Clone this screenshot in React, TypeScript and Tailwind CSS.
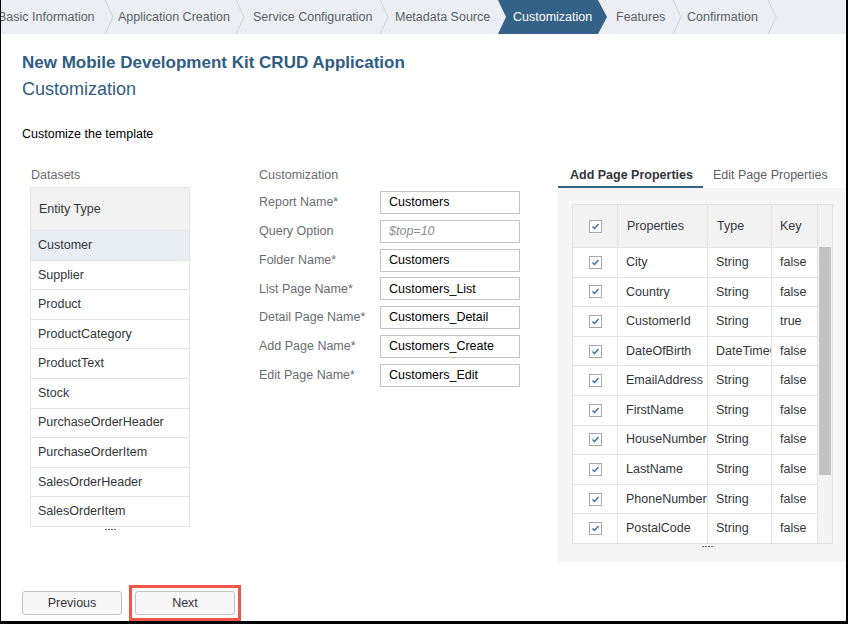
import React from "react";

const steps = [
  { label: "Basic Information", w: "w-[106px]", pl: "pl-0 -ml-[3px]" },
  { label: "Application Creation", w: "w-[121px]", pl: "pl-[4px]" },
  { label: "Service Configuration", w: "w-[134px]", pl: "pl-[8px]" },
  { label: "Metadata Source", w: "w-[109px]", pl: "pl-[6px]" },
];

const datasets = [
  "Customer",
  "Supplier",
  "Product",
  "ProductCategory",
  "ProductText",
  "Stock",
  "PurchaseOrderHeader",
  "PurchaseOrderItem",
  "SalesOrderHeader",
  "SalesOrderItem",
];

const fields = [
  { label: "Report Name*", value: "Customers" },
  { label: "Query Option", value: "$top=10", placeholder: true },
  { label: "Folder Name*", value: "Customers" },
  { label: "List Page Name*", value: "Customers_List" },
  { label: "Detail Page Name*", value: "Customers_Detail" },
  { label: "Add Page Name*", value: "Customers_Create" },
  { label: "Edit Page Name*", value: "Customers_Edit" },
];

const properties = [
  ["City", "String", "false"],
  ["Country", "String", "false"],
  ["CustomerId", "String", "true"],
  ["DateOfBirth", "DateTimeOffset", "false"],
  ["EmailAddress", "String", "false"],
  ["FirstName", "String", "false"],
  ["HouseNumber", "String", "false"],
  ["LastName", "String", "false"],
  ["PhoneNumber", "String", "false"],
  ["PostalCode", "String", "false"],
];

const Separator = () => (
  <svg width="10" height="34" viewBox="0 0 10 34" className="shrink-0">
    <polyline points="1,0 9,17 1,34" fill="none" stroke="#cdd2d8" strokeWidth="1" />
  </svg>
);

const Check = () => (
  <span className="flex h-[13px] w-[13px] items-center justify-center border border-[#a9a9a9] bg-white">
    <svg width="9" height="9" viewBox="0 0 9 9">
      <polyline points="1.5,4.5 3.5,6.5 7.5,2" fill="none" stroke="#2f6ea5" strokeWidth="1.3" />
    </svg>
  </span>
);

const MoreDots = () => (
  <div className="mx-auto mt-[2px] flex w-fit gap-[1px]">
    <span className="h-[1px] w-[2px] bg-[#666]" />
    <span className="h-[1px] w-[2px] bg-[#666]" />
    <span className="h-[1px] w-[2px] bg-[#666]" />
    <span className="h-[1px] w-[2px] bg-[#666]" />
  </div>
);

export default function App() {
  return (
    <div className="relative h-[624px] w-[848px] overflow-hidden border-b-[3px] border-l border-r-2 border-black bg-white font-['Liberation_Sans',Arial,sans-serif] text-[12.5px] text-[#32363a]">
      {/* wizard steps */}
      <div className="flex h-[34px] items-center bg-[#ebeff4] text-[#5b5f63]">
        {steps.map((s) => (
          <React.Fragment key={s.label}>
            <div className={`${s.w} ${s.pl} shrink-0 whitespace-nowrap pt-[1px]`}>{s.label}</div>
            {s.label !== "Metadata Source" && <Separator />}
          </React.Fragment>
        ))}
        <div className="flex h-[34px] w-[109px] shrink-0 items-center bg-[#346187] pl-[15px] pt-[1px] text-white [clip-path:polygon(0_0,calc(100%-9px)_0,100%_50%,calc(100%-9px)_100%,0_100%,8px_50%)]">
          Customization
        </div>
        <div className="w-[65px] shrink-0 pl-[9px] pt-[1px]">Features</div>
        <Separator />
        <div className="w-[85px] shrink-0 pl-[5px] pt-[1px]">Confirmation</div>
        <Separator />
      </div>

      <div className="pl-[21px] pt-[18px]">
        <h1 className="text-[17px] font-bold leading-[22px] text-[#305d82]">
          New Mobile Development Kit CRUD Application
        </h1>
        <h2 className="mt-[4px] text-[18px] leading-[22px] text-[#305d82]">Customization</h2>
        <p className="mt-[26px] text-[12.5px] leading-[16px] text-black">Customize the template</p>
      </div>

      <div className="mt-[25px] flex pl-[29px]">
        {/* datasets */}
        <div className="w-[160px] shrink-0">
          <div className="h-[20px] pl-[1px] leading-[16px] text-[#6a6d70]">Datasets</div>
          <div className="border border-[#e4e4e4]">
            <div className="flex h-[42px] items-center bg-[#f2f2f2] pl-[8px] text-[#32363a]">Entity Type</div>
            {datasets.map((d, i) => (
              <div
                key={d}
                className={`flex h-[29.6px] items-center border-t border-[#e4e4e4] pl-[7px] ${
                  i === 0 ? "bg-[#e8eef4]" : "bg-white"
                }`}
              >
                {d}
              </div>
            ))}
          </div>
          <MoreDots />
        </div>

        {/* customization form */}
        <div className="ml-[69px] w-[261px] shrink-0">
          <div className="h-[20px] leading-[16px] text-[#6a6d70]">Customization</div>
          <div className="mt-[4px] flex flex-col gap-[5.8px]">
            {fields.map((f) => (
              <div key={f.label} className="flex h-[23px] items-center">
                <div className="w-[121px] text-[#6a6d70]">{f.label}</div>
                <div
                  className={`flex h-[23px] w-[140px] items-center border border-[#c4c4c4] bg-white pl-[8px] ${
                    f.placeholder ? "italic text-[#8a8d90]" : "text-black"
                  }`}
                >
                  {f.value}
                </div>
              </div>
            ))}
          </div>
        </div>

        {/* page properties */}
        <div className="ml-[38px] flex-1">
          <div className="flex h-[21px] leading-[16px]">
            <div className="w-[145px] border-b-2 border-[#346187] pl-[12px] font-bold text-[#32363a]">
              Add Page Properties
            </div>
            <div className="pl-[10px] text-[#5b5f63]">Edit Page Properties</div>
          </div>
          <div className="h-[374px] bg-[#f5f5f5] pl-[14px] pt-[16px]">
            <div className="flex w-[261px] border border-[#e1e1e1] bg-white">
              <div className="w-[245px]">
                <div className="flex h-[42px] items-center bg-[#f2f2f2]">
                  <div className="flex h-full w-[45px] items-center justify-center border-r border-[#e1e1e1]">
                    <Check />
                  </div>
                  <div className="flex h-full w-[90px] items-center border-r border-[#e1e1e1] pl-[9px]">Properties</div>
                  <div className="flex h-full w-[64px] items-center border-r border-[#e1e1e1] pl-[9px]">Type</div>
                  <div className="flex h-full w-[46px] items-center border-r border-[#e1e1e1] pl-[8px]">Key</div>
                </div>
                {properties.map(([name, type, key]) => (
                  <div key={name} className="flex h-[29.6px] items-center border-t border-[#e4e4e4]">
                    <div className="flex h-full w-[45px] items-center justify-center border-r border-[#e4e4e4]">
                      <Check />
                    </div>
                    <div className="flex h-full w-[90px] items-center overflow-hidden whitespace-nowrap border-r border-[#e4e4e4] pl-[8px]">
                      {name}
                    </div>
                    <div className="flex h-full w-[64px] items-center overflow-hidden whitespace-nowrap border-r border-[#e4e4e4] pl-[8px]">
                      {type}
                    </div>
                    <div className="flex h-full w-[46px] items-center border-r border-[#e4e4e4] pl-[8px]">{key}</div>
                  </div>
                ))}
              </div>
              <div className="flex w-[15px] flex-col">
                <div className="h-[42px] bg-[#f2f2f2]" />
                <div className="flex-1 bg-[#f4f4f4] px-[1px]">
                  <div className="h-[228px] bg-[#c3c3c3]" />
                </div>
              </div>
            </div>
            <div className="w-[270px]">
              <MoreDots />
            </div>
          </div>
        </div>
      </div>

      {/* footer buttons */}
      <div className="mt-[23px] flex items-center pl-[21px]">
        <button className="h-[24px] w-[100px] rounded-[3px] border border-[#c2c2c2] bg-[#f7f7f7] text-[12.5px] text-[#32363a]">
          Previous
        </button>
        <div className="ml-[7px] border-[3px] border-[#ef5648] p-[3px]">
          <button className="block h-[24px] w-[100px] rounded-[3px] border border-[#c2c2c2] bg-[#f7f7f7] text-[12.5px] text-[#32363a]">
            Next
          </button>
        </div>
      </div>
    </div>
  );
}
